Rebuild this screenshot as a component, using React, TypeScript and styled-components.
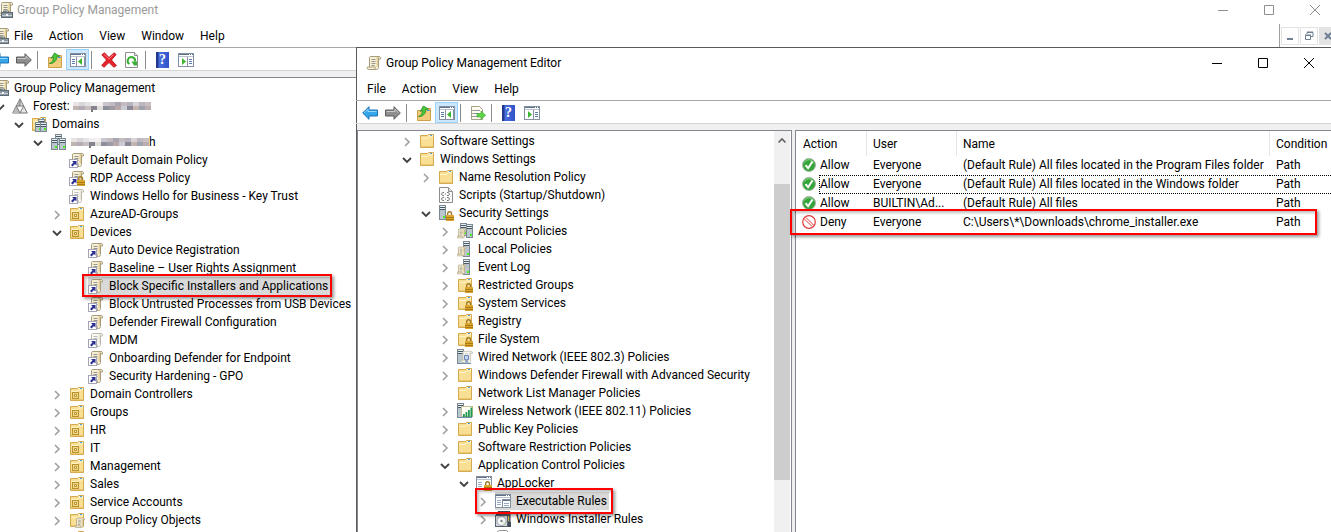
import React from "react";
import styled, { createGlobalStyle, css } from "styled-components";

const GlobalStyle = createGlobalStyle`
  * { box-sizing: border-box; }
  html, body, #root { height: 100%; }
  body {
    margin: 0;
    overflow: hidden;
    background: #fff;
    color: #000;
    font-family: Roboto, "Segoe UI", "Open Sans", sans-serif;
    font-size: 12px;
    line-height: 18px;
  }
  button { font: inherit; color: inherit; background: none; border: 0; padding: 0; }
  svg { display: block; flex: none; }
`;

/* ---------- icon drawings ---------- */

const Svg = styled.svg.attrs({ viewBox: "0 0 16 16", width: 16, height: 16, "aria-hidden": true })``;

const ScrollShape = ({ pale = false }: { pale?: boolean }) => (
  <>
    <path
      d="M4.5 1.5H13c1.4 0 1.8 1 1.5 2.5h-2v8.5c0 1.4-.8 2-2 2H2.500c-1.400 0-1.700-1.600-.9-2.500h1.900V3c0-.9.4-1.500 1-1.500z"
      fill={pale ? "#fbfaf5" : "#f6efd8"}
      stroke={pale ? "#bdb9ad" : "#a89c7a"}
    />
    <path d="M12.500 4V2.500M10 14c-1-.3-1-1.200-.6-2H3" fill="none" stroke={pale ? "#cbc6b5" : "#b3a37a"} />
    <path d="M10.500 2v9.500h1.500V2z" fill={pale ? "#e9e5d8" : "#e3cf97"} />
    <path d="M5.500 4.500h4M5.500 6.500h4M5.500 8.500h4M5.500 10.500h3" stroke={pale ? "#bbb" : "#9a9788"} />
  </>
);

const ShortcutBadge = () => (
  <>
    <rect x=".5" y="7.500" width="8" height="8" fill="#fff" stroke="#a5a5b5" />
    <path d="M3 9h4.500v4.500L6 12l-2.500 2.500L2 13l2.500-2.500z" fill="#2b2f8f" />
  </>
);

const Lock = () => (
  <>
    <path d="M9.700 10.500V8.800c0-2.700 3.800-2.700 3.800 0v1.700" fill="none" stroke="#a07a26" strokeWidth="1.400" />
    <rect x="8" y="10" width="8" height="6" rx=".5" fill="#dba52c" />
    <path d="M8 12.500h8M8 14.500h8" stroke="#a97a14" />
  </>
);

const FolderShape = () => (
  <>
    <path d="M1.500 2.500h7l1-1h5v13h-13z" fill="#f9df93" stroke="#d3a94c" />
    <path d="M2 5.500h6.500l1-1.500H14" fill="none" stroke="#fff3c8" />
    <path d="M10 2.500h4" stroke="#fff" />
    <path d="M11 2.500h2" stroke="#4a9fe0" />
    <path d="M2 14h12.500" stroke="#dcb055" />
  </>
);

const Tower = ({ x = 3, y = 1, h = 14 }: { x?: number; y?: number; h?: number }) => (
  <>
    <rect x={x + 0.5} y={y + 0.5} width="6" height={h - 1} fill="#b9c6cd" stroke="#7b8992" />
    <path d={`M${x + 1} ${y + 2.5}h5M${x + 1} ${y + 4.5}h5`} stroke="#4a5861" />
    <path d={`M${x + 1} ${y + 1.5}h5M${x + 1} ${y + 3.5}h5`} stroke="#e6eef2" />
    <rect x={x + 4} y={y + h - 4} width="2" height="2" fill="#4df01c" />
  </>
);

const PanelShape = () => (
  <>
    <rect x=".5" y="1.500" width="15" height="13" fill="#fff" stroke="#8290a2" />
    <path d="M1 2.500h14" stroke="#63728a" />
    <path d="M1 4.500h14" stroke="#b9c3d0" />
    <path d="M11 2.500h1M13 2.500h1" stroke="#fff" />
  </>
);

const ManageIcon = () => (
  <Svg>
    <g transform="translate(1 -1)"><ScrollShape /></g>
    <path d="M6.500 10.500V9h5v1.500" fill="none" stroke="#5e6e78" />
    <rect x="4.500" y="10.500" width="11" height="5" fill="#8b99a2" stroke="#5e6b74" />
    <path d="M5 13.500h10" stroke="#c3cdd3" />
    <rect x="9" y="12" width="2" height="2" fill="#f1f5f7" />
  </Svg>
);
const ScrollIcon = () => <Svg><ScrollShape /></Svg>;
const PolicyIcon = () => <Svg><ScrollShape /><ShortcutBadge /></Svg>;
const PalePolicyIcon = () => <Svg><ScrollShape pale /><ShortcutBadge /></Svg>;
const LockedPolicyIcon = () => <Svg><ScrollShape /><ShortcutBadge /><Lock /></Svg>;
const ForestIcon = () => (
  <Svg>
    <path d="M8 .8 15.300 15H.7z" fill="#e4e4e4" stroke="#777" />
    <path d="M8 1v7H4.500zM4.300 8.500 8 15H1z" fill="#b9b9b9" />
    <path d="M4.300 8h7.400L8 15zM8 1v7" fill="#fafafa" stroke="#777" />
  </Svg>
);
const DomainsIcon = () => (
  <Svg>
    <FolderShape />
    <Tower x={7} y={3} h={9} />
    <Tower x={4} y={6} h={10} />
    <Tower x={9} y={6} h={10} />
  </Svg>
);
const DomainIcon = () => (
  <Svg>
    <Tower x={5} y={0} h={11} />
    <Tower x={1} y={4} h={12} />
    <Tower x={9} y={4} h={12} />
  </Svg>
);
const OuIcon = () => (
  <Svg>
    <FolderShape />
    <rect x="3.500" y="6.500" width="6" height="6" fill="#f3d583" stroke="#b8922e" />
    <path d="M5.500 8.500h2v2h-2z" fill="#fffbe0" stroke="#b8922e" />
  </Svg>
);
const FolderIcon = () => <Svg><FolderShape /></Svg>;
const LockedFolderIcon = () => <Svg><FolderShape /><Lock /></Svg>;
const PolicyFolderIcon = () => (
  <Svg>
    <FolderShape />
    <g transform="translate(5 5) scale(.72)"><ScrollShape /></g>
  </Svg>
);
const ScriptIcon = () => (
  <Svg>
    <path d="M1.500.5h9l4 4v11h-13z" fill="#fafafa" stroke="#8d8d8d" />
    <path d="M10.500.5v4h4" fill="#ddd" stroke="#8d8d8d" />
    <path d="M6 5.500H4.500L3.500 7l1 1.500H6M9 5.500h1.500l1 1.500-1 1.500H9M6 10.500H4.500l-1 1.500 1 1.500H6M9 10.500h1.500l1 1.500-1 1.500H9M7 7h1M7 12h1" fill="none" stroke="#777" />
  </Svg>
);
const SecurityIcon = () => <Svg><Tower x={1} y={0} h={15} /><Lock /></Svg>;
const MiniScroll = () => (
  <g transform="translate(-1 5) scale(.68)"><ScrollShape /></g>
);
const AccountIcon = () => <Svg><Tower x={3} y={0} h={13} /><Tower x={9} y={1} h={14} /><MiniScroll /></Svg>;
const ServerPolicyIcon = () => <Svg><Tower x={6} y={0} h={16} /><MiniScroll /></Svg>;
const WiredIcon = () => (
  <Svg>
    <Tower x={0} y={0} h={15} />
    <g transform="translate(3 1) scale(.85)"><ScrollShape pale /></g>
    <path d="M7.500 6.500h4v4h-1.500v3M7.500 6.500v4H9v3" fill="#c4d4f0" stroke="#6b85b5" />
    <path d="M3 14.500h11" stroke="#6d8fae" />
  </Svg>
);
const WirelessIcon = () => (
  <Svg>
    <Tower x={0} y={0} h={15} />
    <rect x="4.500" y="3.500" width="11" height="10" fill="#fffef2" stroke="#c7bd97" />
    <path d="M6 11h1.800v3H6zM8.500 9h1.800v5H8.500zM11 7h1.800v7H11zM13.500 4.500h1.800V14h-1.800z" fill="#1f9a52" />
    <path d="M2 14.500h13" stroke="#6d8fae" />
  </Svg>
);
const AppLockerIcon = () => (
  <Svg>
    <PanelShape />
    <path d="M2 7.500h4M2 9.500h4M2 11.500h4" stroke="#93a8c4" />
    <Lock />
  </Svg>
);
const RulesIcon = () => (
  <Svg>
    <PanelShape />
    <path d="M2 7.500h4M2 9.500h4M2 11.500h4" stroke="#93a8c4" />
    <rect x="7.500" y="6.500" width="8" height="8" fill="#fff" stroke="#8290a2" />
    <path d="M8 7.500h7" stroke="#63728a" />
    <path d="M9 10.500h5M9 12.500h5" stroke="#93a8c4" />
  </Svg>
);
const InstallerIcon = () => (
  <Svg>
    <path d="M3 .5h12v12H3z" fill="#5c6978" stroke="#3e4854" />
    <path d="M4 2.500h10" stroke="#aab4c0" />
    <rect x="9" y="5" width="5" height="5" fill="#e3b13a" />
    <path d="M1 3h3v3H1zM13 11h3v5h-3z" fill="#424c58" />
    <rect x=".5" y="4.500" width="12" height="11" fill="#d3d7db" stroke="#59636e" />
    <circle cx="6.500" cy="10" r="4.500" fill="#f8f8f8" stroke="#9aa2aa" />
    <circle cx="6.500" cy="10" r="1.200" fill="#7d858d" />
    <path d="m7.500 11 2 2.500 1-1.500z" fill="#bfe28e" />
  </Svg>
);
const PageIcon = () => (
  <Svg><path d="M2.500 2.500l2-1h7l2 2v12h-11z" fill="#fff" stroke="#8e8e8e" /></Svg>
);

const BackIcon = () => (
  <Svg><path d="M.7 8 7 1.700V5h8.500v6H7v3.300z" fill="#35a6ea" stroke="#1c72b8" strokeLinejoin="round" /><path d="M2.500 7.700 6 4.200V6.500h8.500" fill="none" stroke="#93d7fb" /></Svg>
);
const ForwardIcon = () => (
  <Svg><path d="M15.300 8 9 1.700V5H.5v6H9v3.300z" fill="#8e8e8e" stroke="#5b5b5b" strokeLinejoin="round" /><path d="M1.500 6.500H10V4.200l3.500 3.500" fill="none" stroke="#c9c9c9" /></Svg>
);
const UpIcon = () => (
  <Svg>
    <path d="M1.500 5.500h6l1-2h6v12h-13z" fill="#f3cd7b" stroke="#cfa04a" />
    <path d="M11 5.500h3" stroke="#4a9fe0" />
    <path d="M2.500 11.500C5 10.500 6.500 8.500 6.500 5.500l-2.300.8L7.500 1l5 3.200-2.600.5C9.800 8.500 7 11.800 2.500 11.500z" fill="#4cc63c" stroke="#238c22" strokeWidth=".8" />
  </Svg>
);
const TreePanelIcon = () => (
  <Svg>
    <PanelShape />
    <path d="M2 7.500h3M2 9.500h3M2 11.500h3" stroke="#5d7da8" />
    <path d="M6.500 5v9M14.500 5v9" stroke="#8290a2" />
    <path d="M12 6v7L8 9.500z" fill="#3db52e" />
  </Svg>
);
const ActionPanelIcon = () => (
  <Svg>
    <PanelShape />
    <path d="M11 7.500h3M11 9.500h3M11 11.500h3" stroke="#5d7da8" />
    <path d="M9.500 5v9" stroke="#8290a2" />
    <path d="M4 6v7l4-3.500z" fill="#3db52e" />
  </Svg>
);
const DeleteIcon = () => (
  <Svg><path d="M.8 2.800 3.500.8 8 5.500l5-4.700 2.200 1.600L10.500 8l5 5.500-2.700 1.800L8 10.500l-5 4.800-2.300-2L5.500 8z" fill="#e8222a" stroke="#b5141b" strokeWidth=".8" /><path d="M3 2.300 8 7l4.500-4.500" fill="none" stroke="#f77d80" /></Svg>
);
const RefreshIcon = () => (
  <Svg>
    <path d="M1.500.5h9l3 3v12h-12z" fill="#fff" stroke="#8f8f8f" />
    <path d="M10.500.5v3h3" fill="#e5e5e5" stroke="#8f8f8f" />
    <path d="M5.500 12A3.700 3.700 0 1 1 11 9.500" fill="none" stroke="#3aae35" strokeWidth="2" />
    <path d="M7.500 9.500h5.500v4h-3z" fill="#3aae35" />
  </Svg>
);
const ExportIcon = () => (
  <Svg>
    <path d="M1.500 1.500h8l3 3v10h-11z" fill="#fffbe9" stroke="#a3a08f" />
    <path d="M4 5.500h6M4 8.500h5M4 11.500h5" stroke="#8c97b5" />
    <path d="M2.500 5.500h1M2.500 8.500h1M2.500 11.500h1" stroke="#444" />
    <path d="M7 8.500h4V6l4.700 4.200L11 14.500V12H7z" fill="#5fd446" stroke="#3aa52c" strokeWidth=".6" />
  </Svg>
);
const HelpBadge = styled.span`
  display: flex;
  align-items: center;
  justify-content: center;
  width: 13px;
  height: 16px;
  background: linear-gradient(90deg, #23398f 0 2px, #4a6ede 3px, #2f52c8);
  color: #fff;
  font: 700 14px/16px "Liberation Serif", serif;
`;
const AllowIcon = () => (
  <Svg viewBox="0 0 14 14" width={14} height={14}>
    <circle cx="7" cy="7" r="6.500" fill="#35a43a" stroke="#a5b8a5" />
    <path d="M2.500 4.500a5 5 0 0 1 9 0" fill="none" stroke="#8ad58a" />
    <path d="m3.500 7.200 2.600 3L10.500 3.500" fill="none" stroke="#fff" strokeWidth="2" />
  </Svg>
);
const DenyIcon = () => (
  <Svg viewBox="0 0 14 14" width={14} height={14}>
    <circle cx="7" cy="7" r="6.300" fill="#fff" stroke="#e03a3a" strokeWidth="1.200" />
    <path d="m2.500 4 7.500 7.500M4 2.500l7.500 7.500" fill="none" stroke="#e03a3a" />
  </Svg>
);

/* ---------- shared window parts ---------- */

const Desktop = styled.div`
  position: relative;
  height: 100vh;
  min-height: 100%;
  overflow: hidden;
`;
const MainWindow = styled.section`
  display: flex;
  flex-direction: column;
  height: 100%;
`;
const EditorWindow = styled.section`
  position: absolute;
  left: 356px;
  top: 47px;
  right: 0;
  bottom: 0;
  display: flex;
  flex-direction: column;
  background: #fff;
  border: solid #5a5a5a;
  border-width: 1px 0 0 1px;
`;
const TitleBar = styled.header<{ $main?: boolean }>`
  display: flex;
  align-items: center;
  flex: none;
  gap: 4px;
  height: ${(p) => (p.$main ? 22 : 30)}px;
  padding-left: ${(p) => (p.$main ? 0 : 9)}px;
  padding-bottom: ${(p) => (p.$main ? 2 : 0)}px;
  color: ${(p) => (p.$main ? "#9a9a9a" : "#000")};
`;
const Title = styled.h1`
  flex: 1;
  margin: 0;
  font-size: 12px;
  font-weight: 400;
`;
const ClippedIcon = styled.span`
  display: flex;
  justify-content: flex-end;
  width: 13px;
  overflow: hidden;
`;
const Captions = styled.div<{ $main?: boolean }>`
  display: flex;
  margin-right: ${(p) => (p.$main ? -7 : -1)}px;
`;
const CaptionButton = styled.button`
  display: flex;
  align-items: center;
  justify-content: center;
  width: 46px;
  height: 18px;
`;
const MenuBar = styled.nav<{ $main?: boolean }>`
  display: flex;
  align-items: center;
  flex: none;
  gap: 16px;
  height: ${(p) => (p.$main ? 25 : 22)}px;
  padding-top: ${(p) => (p.$main ? 2 : 0)}px;
  padding-left: ${(p) => (p.$main ? 0 : 10)}px;
`;
const MenuIcon = styled(ClippedIcon)`
  width: 9px;
  margin-right: -11px;
`;
const ChildCaptions = styled.div`
  display: flex;
  align-self: stretch;
  align-items: flex-end;
  gap: 1px;
  margin-left: auto;
  margin-right: -6px;
  padding: 0 0 2px 1px;
  border-left: 1px solid #a0a0a0;
`;
const ChildCaption = styled.button<{ $shaded?: boolean }>`
  display: flex;
  align-items: center;
  justify-content: center;
  width: 18px;
  height: 18px;
  border: 1px solid #e3e3e3;
  background: ${(p) => (p.$shaded ? "#e3e3e3" : "#fff")};
`;
const ToolBar = styled.div<{ $main?: boolean }>`
  display: flex;
  align-items: flex-end;
  flex: none;
  height: 24px;
  padding-left: 2px;
  margin-left: ${(p) => (p.$main ? -13 : -1)}px;
  border: solid #a8a8a8;
  border-width: 1px 0;
  border-bottom-color: #d6d6d6;
`;
const ToolButton = styled.button<{ $on?: boolean }>`
  display: flex;
  align-items: center;
  justify-content: center;
  width: 23px;
  height: 21px;
  ${(p) => p.$on && css`
    background: #cce8ff;
    border: 1px solid #99d1ff;
  `}
`;
const ToolDivider = styled.span`
  flex: none;
  width: 1px;
  height: 18px;
  margin: 0 5px 1px 2px;
  background: #8c8c8c;
`;
const Gutter = styled.div`
  flex: none;
  height: 6px;
  background: #f0f0f0;
`;

/* ---------- tree ---------- */

const Panes = styled.div`
  display: flex;
  flex: 1;
  min-height: 0;
  gap: 3px;
  background: #f0f0f0;
`;
const MainPane = styled.div`
  flex: 1;
  min-height: 0;
  overflow: hidden;
  border-top: 1px solid #828790;
`;
const EditorPane = styled.div`
  display: flex;
  width: 435px;
  flex: none;
  overflow: hidden;
  background: #fff;
  border: 1px solid #828790;
  border-bottom: 0;
`;
const TreeList = styled.ul<{ $main?: boolean }>`
  flex: 1;
  margin: 0;
  margin-left: ${(p) => (p.$main ? -26 : 0)}px;
  padding: 1px 0 0 ${(p) => (p.$main ? 0 : 42)}px;
  list-style: none;
  white-space: nowrap;
`;
const TreeRow = styled.li<{ $depth: number }>`
  display: flex;
  align-items: center;
  height: 18px;
  padding-left: ${(p) => p.$depth * 19}px;
`;
const Toggle = styled.span`
  display: flex;
  align-items: center;
  width: 19px;
  padding: 1px 0 0 1px;
`;
const Marked = styled.span<{ $mark?: "label" | "row" }>`
  position: relative;
  display: flex;
  ${(p) => p.$mark && css`
    &::after {
      content: "";
      position: absolute;
      z-index: 1;
      inset: ${p.$mark === "label" ? "-3px -2px -2px 13px" : "-4px -4px -4px -1px"};
      border: 2px solid #ff0000;
      box-shadow: 2px 2px 3px rgba(0, 0, 0, 0.4), inset 2px 2px 3px rgba(0, 0, 0, 0.25);
    }
  `}
`;
const TreeLabel = styled.span<{ $selected?: boolean }>`
  display: flex;
  align-items: center;
  gap: 5px;
  padding-right: 2px;
  background: ${(p) => (p.$selected ? "#d9d9d9" : "transparent")};
`;
const RedactedText = styled.span<{ $gap: number }>`
  display: flex;
  align-items: center;
  gap: ${(p) => p.$gap}px;
`;

const Chevron = ({ open }: { open: boolean }) => (
  <svg width="12" height="12" viewBox="0 0 12 12" aria-hidden="true">
    {open ? (
      <path d="m2 4 4 4 4-4" fill="none" stroke="#404040" strokeWidth="1.800" />
    ) : (
      <path d="m4 2 4 4-4 4" fill="none" stroke="#a0a0a0" strokeWidth="1.600" />
    )}
  </svg>
);

const upperShades = ["#e8e4e4", "#d9d5d8", "#e4e2e6", "#f0eeee", "#f4f0f0", "#c9c6cf", "#c2bcc0", "#a9a6b2", "#c4bcc0", "#b6b2be", "#d8d4d6", "#bdb8c0", "#c8c0c2"];
const lowerShades = ["#c0b4b0", "#b2acb4", "#c8bfc0", "#88848f", "#e0dcd8", "#8c8f9c", "#a09aa6", "#b8a8a8", "#c9ccd4", "#8c8996", "#c4b4b0", "#9fa3ad", "#bcaeb0"];
const Redaction = () => (
  <svg width="78" height="12" viewBox="0 0 78 12" role="img" aria-label="redacted">
    {upperShades.map((c, i) => (
      <React.Fragment key={i}>
        <rect x={i * 6} y="2" width="6" height="4" fill={c} />
        <rect x={i * 6} y="6" width="6" height="4" fill={lowerShades[i]} />
      </React.Fragment>
    ))}
    <path d="M18 10h2v2h-2z" fill="#777" />
  </svg>
);

type Node = {
  depth: number;
  text: React.ReactNode;
  Icon: React.ComponentType;
  open?: boolean;
  selected?: boolean;
  mark?: "label" | "row";
};

const n = (depth: number, Icon: React.ComponentType, text: React.ReactNode, open?: boolean, mark?: "label" | "row"): Node => ({
  depth, Icon, text, open, mark, selected: !!mark,
});

const domainTree: Node[] = [
  n(0, ManageIcon, "Group Policy Management"),
  n(1, ForestIcon, <RedactedText $gap={3}>Forest:<Redaction /></RedactedText>, true),
  n(2, DomainsIcon, "Domains", true),
  n(3, DomainIcon, <RedactedText $gap={0}><Redaction />h</RedactedText>, true),
  n(4, PolicyIcon, "Default Domain Policy"),
  n(4, LockedPolicyIcon, "RDP Access Policy"),
  n(4, PalePolicyIcon, "Windows Hello for Business - Key Trust"),
  n(4, OuIcon, "AzureAD-Groups", false),
  n(4, OuIcon, "Devices", true),
  n(5, PolicyIcon, "Auto Device Registration"),
  n(5, PolicyIcon, "Baseline – User Rights Assignment"),
  n(5, PolicyIcon, "Block Specific Installers and Applications", undefined, "label"),
  n(5, PolicyIcon, "Block Untrusted Processes from USB Devices"),
  n(5, PolicyIcon, "Defender Firewall Configuration"),
  n(5, PalePolicyIcon, "MDM"),
  n(5, PolicyIcon, "Onboarding Defender for Endpoint"),
  n(5, PolicyIcon, "Security Hardening - GPO"),
  n(4, OuIcon, "Domain Controllers", false),
  n(4, OuIcon, "Groups", false),
  n(4, OuIcon, "HR", false),
  n(4, OuIcon, "IT", false),
  n(4, OuIcon, "Management", false),
  n(4, OuIcon, "Sales", false),
  n(4, OuIcon, "Service Accounts", false),
  n(4, PolicyFolderIcon, "Group Policy Objects", false),
  n(4, FolderIcon, ""),
];

const settingsTree: Node[] = [
  n(0, FolderIcon, "Software Settings", false),
  n(0, FolderIcon, "Windows Settings", true),
  n(1, FolderIcon, "Name Resolution Policy", false),
  n(1, ScriptIcon, "Scripts (Startup/Shutdown)"),
  n(1, SecurityIcon, "Security Settings", true),
  n(2, AccountIcon, "Account Policies", false),
  n(2, ServerPolicyIcon, "Local Policies", false),
  n(2, ServerPolicyIcon, "Event Log", false),
  n(2, LockedFolderIcon, "Restricted Groups", false),
  n(2, LockedFolderIcon, "System Services", false),
  n(2, LockedFolderIcon, "Registry", false),
  n(2, LockedFolderIcon, "File System", false),
  n(2, WiredIcon, "Wired Network (IEEE 802.3) Policies", false),
  n(2, FolderIcon, "Windows Defender Firewall with Advanced Security", false),
  n(2, FolderIcon, "Network List Manager Policies"),
  n(2, WirelessIcon, "Wireless Network (IEEE 802.11) Policies", false),
  n(2, FolderIcon, "Public Key Policies", false),
  n(2, FolderIcon, "Software Restriction Policies", false),
  n(2, FolderIcon, "Application Control Policies", true),
  n(3, AppLockerIcon, "AppLocker", true),
  n(4, RulesIcon, "Executable Rules", false, "row"),
  n(4, InstallerIcon, "Windows Installer Rules", false),
  n(4, PageIcon, ""),
];

const Tree = ({ nodes, label, main }: { nodes: Node[]; label: string; main?: boolean }) => (
  <TreeList role="tree" aria-label={label} $main={main}>
    {nodes.map(({ depth, Icon, text, open, selected, mark }, i) => (
      <TreeRow key={i} role="treeitem" aria-level={depth + 1} aria-expanded={open} aria-selected={!!selected} $depth={depth}>
        <Marked $mark={mark}>
          <Toggle>{open !== undefined && <Chevron open={open} />}</Toggle>
          <TreeLabel $selected={selected}><Icon />{text}</TreeLabel>
        </Marked>
      </TreeRow>
    ))}
  </TreeList>
);

/* ---------- scroll bar ---------- */

const ScrollBar = styled.div`
  display: flex;
  flex-direction: column;
  flex: none;
  width: 16px;
  margin-right: 1px;
  background: #f0f0f0;
`;
const ScrollUp = styled.button`
  display: flex;
  align-items: center;
  justify-content: center;
  flex: none;
  height: 20px;
`;
const ScrollTrack = styled.div`
  display: grid;
  flex: 1;
  grid-template-rows: 9fr 80fr 14fr;
`;
const ScrollThumb = styled.div`
  grid-row: 2;
  background: #cdcdcd;
`;

/* ---------- rules table ---------- */

const RulesPane = styled.div`
  flex: 1;
  min-width: 0;
  background: #fff;
  border: solid #828790;
  border-width: 1px 0 0 1px;
`;
const RulesTable = styled.table`
  width: 100%;
  table-layout: fixed;
  border-collapse: separate;
  border-spacing: 0;
  white-space: nowrap;
`;
const HeadCell = styled.th<{ $width?: number }>`
  width: ${(p) => (p.$width ? `${p.$width}px` : "auto")};
  height: 25px;
  padding: 0 0 0 6px;
  border-right: 1px solid #e5e5e5;
  font-weight: 400;
  text-align: left;
  &:first-child { padding-left: 7px; }
  &:last-child { border-right: 0; }
`;
const RuleRow = styled.tr<{ $focused?: boolean; $marked?: boolean }>`
  position: relative;
  td {
    height: 19px;
    padding: 0 0 0 6px;
    line-height: 17px;
    ${(p) => p.$focused && "border: dotted #000; border-width: 1px 0;"}
  }
  td:first-child { border: 0; }
  ${(p) => p.$marked && css`
    td:first-child::after {
      content: "";
      position: absolute;
      inset: -4px 14px -3px -6px;
      border: 2px solid #ff0000;
      box-shadow: 2px 2px 3px rgba(0, 0, 0, 0.4), inset 2px 2px 3px rgba(0, 0, 0, 0.25);
    }
  `}
`;
const ActionCell = styled.span`
  display: flex;
  align-items: center;
  gap: 1px;
`;
const ActionText = styled.span<{ $focused?: boolean }>`
  flex: 1;
  height: 19px;
  border: 1px solid transparent;
  ${(p) => p.$focused && "border: 1px dotted #000; border-right-color: transparent;"}
`;

const rules = [
  { action: "Allow", user: "Everyone", name: "(Default Rule) All files located in the Program Files folder" },
  { action: "Allow", user: "Everyone", name: "(Default Rule) All files located in the Windows folder", focused: true },
  { action: "Allow", user: "BUILTIN\\Ad...", name: "(Default Rule) All files" },
  { action: "Deny", user: "Everyone", name: "C:\\Users\\*\\Downloads\\chrome_installer.exe", marked: true },
];

const WindowButtons = ({ main }: { main?: boolean }) => {
  const stroke = main ? "#8f8f8f" : "#000";
  return (
    <Captions $main={main}>
      {[["Minimize", "M0 5.500h10"], ["Maximize", "M.5.5h9v9h-9z"], ["Close", "m0 0 10 10M10 0 0 10"]].map(([name, d]) => (
        <CaptionButton key={name} aria-label={name}>
          <svg width="10" height="10" viewBox="0 0 10 10" aria-hidden="true"><path d={d} fill="none" stroke={stroke} /></svg>
        </CaptionButton>
      ))}
    </Captions>
  );
};

export default function App() {
  return (
    <Desktop>
      <GlobalStyle />
      <MainWindow aria-label="Group Policy Management">
        <TitleBar $main>
          <ClippedIcon><ManageIcon /></ClippedIcon>
          <Title>Group Policy Management</Title>
          <WindowButtons main />
        </TitleBar>
        <MenuBar $main>
          <MenuIcon><ManageIcon /></MenuIcon>
          {["File", "Action", "View", "Window", "Help"].map((m) => <button key={m}>{m}</button>)}
          <ChildCaptions>
            <ChildCaption aria-label="Minimize child window">
              <svg width="10" height="10" aria-hidden="true"><path d="M2 8h6" stroke="#6f7f95" strokeWidth="2" /></svg>
            </ChildCaption>
            <ChildCaption aria-label="Restore child window">
              <svg width="10" height="10" aria-hidden="true"><path d="M3 3V1.500h6v4H7M3 1h6M1.500 4.500h5v4h-5zM1 4h6" fill="none" stroke="#6f7f95" /></svg>
            </ChildCaption>
            <ChildCaption $shaded aria-label="Close child window">
              <svg width="10" height="10" aria-hidden="true"><path d="m2 2 6 6M8 2 2 8" stroke="#6f7f95" strokeWidth="2" /></svg>
            </ChildCaption>
          </ChildCaptions>
        </MenuBar>
        <ToolBar $main role="toolbar" aria-label="Main tools">
          <ToolButton aria-label="Back"><BackIcon /></ToolButton>
          <ToolButton aria-label="Forward"><ForwardIcon /></ToolButton>
          <ToolDivider />
          <ToolButton aria-label="Up one level"><UpIcon /></ToolButton>
          <ToolButton $on aria-label="Show console tree" aria-pressed><TreePanelIcon /></ToolButton>
          <ToolDivider />
          <ToolButton aria-label="Delete"><DeleteIcon /></ToolButton>
          <ToolButton aria-label="Refresh"><RefreshIcon /></ToolButton>
          <ToolDivider />
          <ToolButton aria-label="Help"><HelpBadge>?</HelpBadge></ToolButton>
          <ToolButton aria-label="Show action pane"><ActionPanelIcon /></ToolButton>
        </ToolBar>
        <Gutter />
        <MainPane><Tree main nodes={domainTree} label="Domains" /></MainPane>
      </MainWindow>

      <EditorWindow aria-label="Group Policy Management Editor">
        <TitleBar>
          <ScrollIcon />
          <Title>Group Policy Management Editor</Title>
          <WindowButtons />
        </TitleBar>
        <MenuBar>
          {["File", "Action", "View", "Help"].map((m) => <button key={m}>{m}</button>)}
        </MenuBar>
        <ToolBar role="toolbar" aria-label="Editor tools">
          <ToolButton aria-label="Back"><BackIcon /></ToolButton>
          <ToolButton aria-label="Forward"><ForwardIcon /></ToolButton>
          <ToolDivider />
          <ToolButton aria-label="Up one level"><UpIcon /></ToolButton>
          <ToolButton $on aria-label="Show console tree" aria-pressed><TreePanelIcon /></ToolButton>
          <ToolDivider />
          <ToolButton aria-label="Export list"><ExportIcon /></ToolButton>
          <ToolDivider />
          <ToolButton aria-label="Help"><HelpBadge>?</HelpBadge></ToolButton>
          <ToolButton aria-label="Show action pane"><ActionPanelIcon /></ToolButton>
        </ToolBar>
        <Gutter />
        <Panes>
          <EditorPane>
            <Tree nodes={settingsTree} label="Policy settings" />
            <ScrollBar>
              <ScrollUp aria-label="Scroll up">
                <svg width="10" height="10" viewBox="0 0 10 10" aria-hidden="true"><path d="m1.500 6.500 3.500-3.500 3.500 3.500" fill="none" stroke="#606060" strokeWidth="1.600" /></svg>
              </ScrollUp>
              <ScrollTrack><ScrollThumb /></ScrollTrack>
            </ScrollBar>
          </EditorPane>
          <RulesPane>
            <RulesTable>
              <thead>
                <tr>
                  <HeadCell $width={71}>Action</HeadCell>
                  <HeadCell $width={90}>User</HeadCell>
                  <HeadCell $width={313}>Name</HeadCell>
                  <HeadCell>Condition</HeadCell>
                </tr>
              </thead>
              <tbody>
                {rules.map((r, i) => (
                  <RuleRow key={i} $focused={r.focused} $marked={r.marked}>
                    <td>
                      <ActionCell>
                        {r.action === "Allow" ? <AllowIcon /> : <DenyIcon />}
                        <ActionText $focused={r.focused}>{r.action}</ActionText>
                      </ActionCell>
                    </td>
                    <td>{r.user}</td>
                    <td>{r.name}</td>
                    <td>Path</td>
                  </RuleRow>
                ))}
              </tbody>
            </RulesTable>
          </RulesPane>
        </Panes>
      </EditorWindow>
    </Desktop>
  );
}
